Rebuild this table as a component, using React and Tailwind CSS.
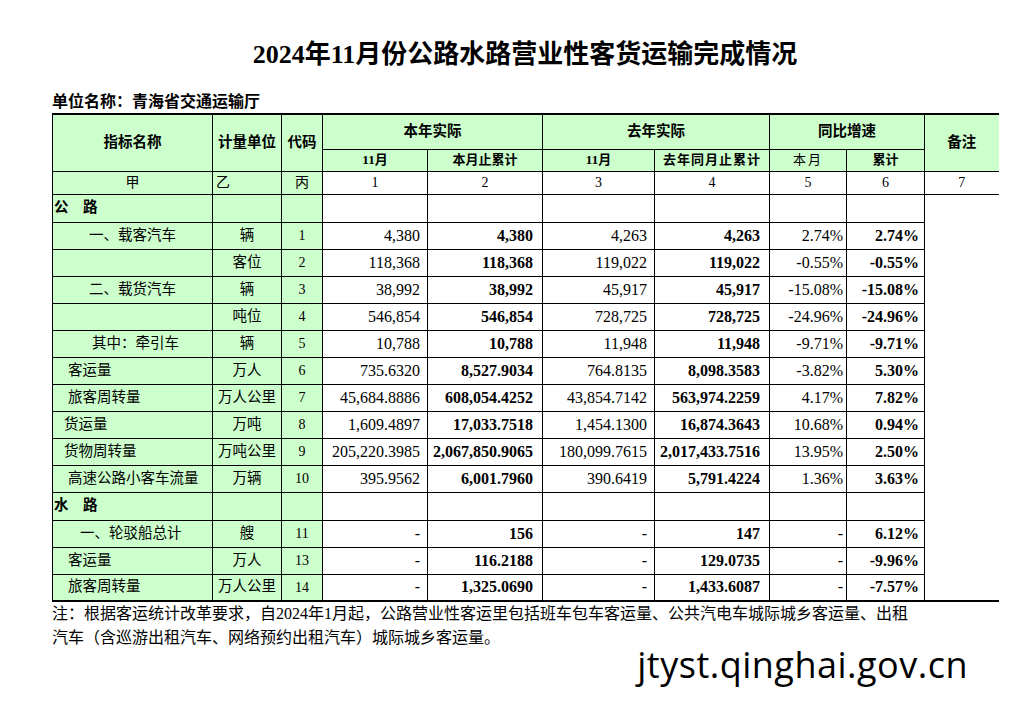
const FONT = { fontFamily: "'Liberation Serif', 'Noto Sans CJK SC', serif" };

const road = [
  { name: "一、载客汽车", pad: "pl-[36px]", unit: "辆", code: "1", v: ["4,380", "4,380", "4,263", "4,263", "2.74%", "2.74%"] },
  { name: "", pad: "", unit: "客位", code: "2", v: ["118,368", "118,368", "119,022", "119,022", "-0.55%", "-0.55%"] },
  { name: "二、载货汽车", pad: "pl-[36px]", unit: "辆", code: "3", v: ["38,992", "38,992", "45,917", "45,917", "-15.08%", "-15.08%"] },
  { name: "", pad: "", unit: "吨位", code: "4", v: ["546,854", "546,854", "728,725", "728,725", "-24.96%", "-24.96%"] },
  { name: "其中：牵引车", pad: "pl-[39px]", unit: "辆", code: "5", v: ["10,788", "10,788", "11,948", "11,948", "-9.71%", "-9.71%"] },
  { name: "客运量", pad: "pl-[15px]", unit: "万人", code: "6", v: ["735.6320", "8,527.9034", "764.8135", "8,098.3583", "-3.82%", "5.30%"] },
  { name: "旅客周转量", pad: "pl-[15px]", unit: "万人公里", code: "7", v: ["45,684.8886", "608,054.4252", "43,854.7142", "563,974.2259", "4.17%", "7.82%"] },
  { name: "货运量", pad: "pl-[11px]", unit: "万吨", code: "8", v: ["1,609.4897", "17,033.7518", "1,454.1300", "16,874.3643", "10.68%", "0.94%"] },
  { name: "货物周转量", pad: "pl-[11px]", unit: "万吨公里", code: "9", v: ["205,220.3985", "2,067,850.9065", "180,099.7615", "2,017,433.7516", "13.95%", "2.50%"] },
  { name: "高速公路小客车流量", pad: "pl-[15px]", unit: "万辆", code: "10", v: ["395.9562", "6,001.7960", "390.6419", "5,791.4224", "1.36%", "3.63%"] },
];

const water = [
  { name: "一、轮驳船总计", pad: "pl-[27px]", unit: "艘", code: "11", v: ["-", "156", "-", "147", "-", "6.12%"] },
  { name: "客运量", pad: "pl-[15px]", unit: "万人", code: "13", v: ["-", "116.2188", "-", "129.0735", "-", "-9.96%"] },
  { name: "旅客周转量", pad: "pl-[15px]", unit: "万人公里", code: "14", v: ["-", "1,325.0690", "-", "1,433.6087", "-", "-7.57%"] },
];

const numCls = [
  "pr-[7px] font-normal",
  "pr-[9px] font-bold",
  "pr-[7px] font-normal",
  "pr-[9px] font-bold",
  "pr-[3px] font-normal",
  "pr-[5px] font-bold",
];

function DataRow({ r, last }) {
  const b = last ? "border-b-2" : "border-b";
  return (
    <tr className="h-[27px]">
      <td className={`border-l border-r ${b} border-black bg-[#ccffcc] text-[14.5px] whitespace-nowrap ${r.pad}`}>{r.name}</td>
      <td className={`border-r ${b} border-black bg-[#ccffcc] text-center text-[14.5px] whitespace-nowrap`}>{r.unit}</td>
      <td className={`border-r ${b} border-black bg-[#ccffcc] text-center text-[14px]`}>{r.code}</td>
      {r.v.map((x, i) => (
        <td key={i} className={`border-r ${b} border-black text-right text-[16px] whitespace-nowrap ${numCls[i]}`}>{x}</td>
      ))}
      <td className={last ? "border-b-2 border-black" : ""}></td>
    </tr>
  );
}

function SectionRow({ title }) {
  return (
    <tr className="h-[28px]">
      <td className="border-l border-r border-b border-black bg-[#ccffcc] pl-[1px] text-[14.5px] font-bold">{title}</td>
      <td className="border-r border-b border-black bg-[#ccffcc]"></td>
      <td className="border-r border-b border-black bg-[#ccffcc]"></td>
      <td className="border-r border-b border-black"></td>
      <td className="border-r border-b border-black"></td>
      <td className="border-r border-b border-black"></td>
      <td className="border-r border-b border-black"></td>
      <td className="border-r border-b border-black"></td>
      <td className="border-r border-b border-black"></td>
      <td></td>
    </tr>
  );
}

export default function App() {
  const hd = "border-black bg-[#ccffcc] text-center font-bold";
  return (
    <div className="min-h-[714px] w-[1025px] bg-white text-black" style={FONT}>
      <div className="ml-[52px] w-[946px] pt-[40px]">
        <h1 className="text-center text-[26px] font-bold leading-[30px]">2024年11月份公路水路营业性客货运输完成情况</h1>
        <div className="mt-[22px] text-[16px] font-bold leading-[20px]">单位名称：青海省交通运输厅</div>
        <table className="mt-[1px] w-[946px] table-fixed border-collapse">
          <colgroup>
            <col className="w-[160px]" />
            <col className="w-[69px]" />
            <col className="w-[41px]" />
            <col className="w-[105px]" />
            <col className="w-[115px]" />
            <col className="w-[112px]" />
            <col className="w-[115px]" />
            <col className="w-[77px]" />
            <col className="w-[78px]" />
            <col className="w-[74px]" />
          </colgroup>
          <thead>
            <tr className="h-[35px]">
              <th rowSpan={2} className={`${hd} border-l border-r border-b border-t-2 text-[14.5px]`}>指标名称</th>
              <th rowSpan={2} className={`${hd} border-r border-b border-t-2 text-[14.5px] whitespace-nowrap`}>计量单位</th>
              <th rowSpan={2} className={`${hd} border-r border-b border-t-2 text-[14.5px]`}>代码</th>
              <th colSpan={2} className={`${hd} border-r border-b border-t-2 text-[14.5px]`}>本年实际</th>
              <th colSpan={2} className={`${hd} border-r border-b border-t-2 text-[14.5px]`}>去年实际</th>
              <th colSpan={2} className={`${hd} border-r border-b border-t-2 text-[14.5px]`}>同比增速</th>
              <th rowSpan={2} className={`${hd} border-b border-t-2 text-[14.5px]`}>备注</th>
            </tr>
            <tr className="h-[22px]">
              <th className={`${hd} border-r border-b text-[13px]`}>11月</th>
              <th className={`${hd} border-r border-b text-[13px]`}>本月止累计</th>
              <th className={`${hd} border-r border-b text-[13px]`}>11月</th>
              <th className={`${hd} border-r border-b text-[13px] tracking-[1px]`}>去年同月止累计</th>
              <th className="border-r border-b border-black bg-[#ccffcc] text-center text-[13px] font-normal tracking-[2px]">本月</th>
              <th className={`${hd} border-r border-b text-[13px]`}>累计</th>
            </tr>
          </thead>
          <tbody>
            <tr className="h-[23px] text-[14px]">
              <td className="border-l border-r border-b border-black bg-[#ccffcc] text-center">甲</td>
              <td className="border-r border-b border-black bg-[#ccffcc] pl-[3px]">乙</td>
              <td className="border-r border-b border-black bg-[#ccffcc] text-center">丙</td>
              {["1", "2", "3", "4", "5", "6"].map((n) => (
                <td key={n} className="border-r border-b border-black text-center">{n}</td>
              ))}
              <td className="border-b border-black text-center">7</td>
            </tr>
            <SectionRow title="公　路" />
            {road.map((r, i) => (
              <DataRow key={"r" + i} r={r} />
            ))}
            <SectionRow title="水　路" />
            {water.map((r, i) => (
              <DataRow key={"w" + i} r={r} last={i === water.length - 1} />
            ))}
          </tbody>
        </table>
        <div className="text-[16px] leading-[24px] whitespace-nowrap">
          注：根据客运统计改革要求，自2024年1月起，公路营业性客运里包括班车包车客运量、公共汽电车城际城乡客运量、出租
          <br />
          汽车（含巡游出租汽车、网络预约出租汽车）城际城乡客运量。
        </div>
        <div className="mt-[-5px] flex justify-end pr-[30px]">
          <span className="text-[36px] leading-[40px] tracking-[0.5px]" style={{ fontFamily: "'Open Sans', sans-serif" }}>
            jtyst.qinghai.gov.cn
          </span>
        </div>
      </div>
    </div>
  );
}
